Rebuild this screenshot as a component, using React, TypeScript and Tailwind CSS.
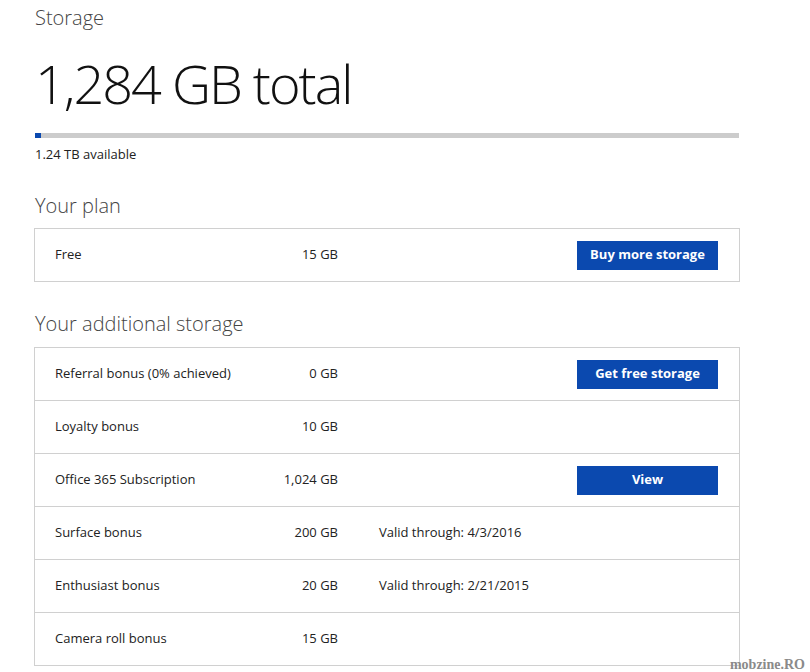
import React from "react";

const font = { fontFamily: '"Open Sans", "Noto Sans", sans-serif' };

type Row = { label: string; amount: string; note?: string; button?: string };

const additional: Row[] = [
  { label: "Referral bonus (0% achieved)", amount: "0 GB", button: "Get free storage" },
  { label: "Loyalty bonus", amount: "10 GB" },
  { label: "Office 365 Subscription", amount: "1,024 GB", button: "View" },
  { label: "Surface bonus", amount: "200 GB", note: "Valid through: 4/3/2016" },
  { label: "Enthusiast bonus", amount: "20 GB", note: "Valid through: 2/21/2015" },
  { label: "Camera roll bonus", amount: "15 GB" },
];

function RowView({ r, last }: { r: Row; last: boolean }) {
  return (
    <div className={`flex items-center h-[52px] pl-[20px] pr-[21px] ${last ? "" : "border-b border-[#d0d0d0] box-content"}`}>
      <div className="w-[200px] text-[13px] text-[#222]">{r.label}</div>
      <div className="w-[83px] text-right text-[13px] text-[#222]">{r.amount}</div>
      {r.note && <div className="ml-[41px] text-[13px] text-[#222]">{r.note}</div>}
      {r.button && (
        <button className="ml-auto w-[141px] h-[29px] bg-[#0b49af] text-white text-[13px] font-bold">
          {r.button}
        </button>
      )}
    </div>
  );
}

export default function App() {
  return (
    <div className="relative w-[810px] h-[672px] bg-white overflow-hidden" style={font}>
      <div className="pl-[34px] w-[740px]">
        <div className="pl-px pt-[3px] text-[20px] font-light text-[#444] leading-[30px]">Storage</div>
        <div className="pl-px mt-[10px] text-[54px] font-light text-[#111] leading-[80px] tracking-[-2px]">1,284 GB total</div>
        <div className="ml-px mt-[10px] h-[5px] bg-[#cccccc] w-[704px]">
          <div className="h-full w-[6px] bg-[#0b49af]" />
        </div>
        <div className="pl-px mt-[7px] text-[13px] text-[#222] leading-[18px]">1.24 TB available</div>
        <div className="pl-px mt-[29px] text-[20px] font-light text-[#444] leading-[28px]">Your plan</div>
        <div className="mt-[8px] border border-[#d0d0d0]">
          <RowView r={{ label: "Free", amount: "15 GB", button: "Buy more storage" }} last />
        </div>
        <div className="pl-px mt-[28px] text-[20px] font-light text-[#444] leading-[28px]">Your additional storage</div>
        <div className="mt-[9px] border border-[#d0d0d0]">
          {additional.map((r, i) => (
            <RowView key={r.label} r={r} last={i === additional.length - 1} />
          ))}
        </div>
      </div>
      <div
        className="absolute right-[5px] bottom-[-3px] text-[14px] font-bold text-[#8a8a8a]"
        style={{ fontFamily: '"Liberation Serif", serif' }}
      >
        mobzine.RO
      </div>
    </div>
  );
}
